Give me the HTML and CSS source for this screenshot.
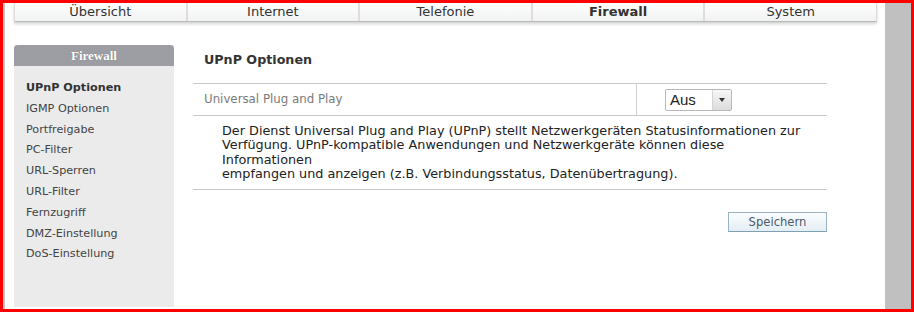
FILE: index.html
```html
<!DOCTYPE html>
<html lang="de">
<head>
    <meta charset="UTF-8">
    <title>Firewall - UPnP Optionen</title>
    <link rel="stylesheet" href="styles.css">
</head>
<body>
    <div class="frame">
        <div class="edge"></div>
        <div class="page">
            <ul class="nav">
                <li>Übersicht</li>
                <li>Internet</li>
                <li>Telefonie</li>
                <li class="active">Firewall</li>
                <li>System</li>
            </ul>

            <div class="layout">
                <div class="sidebar">
                    <div class="sidebar-title">Firewall</div>
                    <ul class="menu">
                        <li class="current">UPnP Optionen</li>
                        <li>IGMP Optionen</li>
                        <li>Portfreigabe</li>
                        <li>PC-Filter</li>
                        <li>URL-Sperren</li>
                        <li>URL-Filter</li>
                        <li>Fernzugriff</li>
                        <li>DMZ-Einstellung</li>
                        <li>DoS-Einstellung</li>
                    </ul>
                </div>

                <div class="main">
                    <h2>UPnP Optionen</h2>
                    <div class="row">
                        <div class="label">Universal Plug and Play</div>
                        <div class="value">
                            <div class="select">
                                <span class="select-text">Aus</span>
                                <span class="select-arrow"></span>
                            </div>
                        </div>
                    </div>
                    <p class="desc">Der Dienst Universal Plug and Play (UPnP) stellt Netzwerkgeräten Statusinformationen zur Verfügung. UPnP-kompatible Anwendungen und Netzwerkgeräte können diese Informationen<br>empfangen und anzeigen (z.B. Verbindungsstatus, Datenübertragung).</p>
                    <div class="actions">
                        <button class="save">Speichern</button>
                    </div>
                </div>
            </div>
        </div>
        <div class="scroll"></div>
    </div>
</body>
</html>
```

FILE: styles.css
```css
body {
    margin: 0;
    font-family: 'DejaVu Sans', Verdana, sans-serif;
    font-size: 11px;
    color: #333;
    background: #fff;
}

.frame {
    display: flex;
    width: 908px;
    height: 306px;
    border: 3px solid #f00;
    overflow: hidden;
}

.edge {
    width: 2px;
    background: #c6c6c6;
}

.page {
    flex: 1;
    padding: 0 8px 0 9px;
    background: #fff;
}

.scroll {
    width: 26px;
    background: #c0c0c0;
}

/* Hauptnavigation */
.nav {
    display: flex;
    margin: 0;
    padding: 0;
    list-style: none;
    height: 18px;
    background: linear-gradient(#ffffff, #f1f2f3);
    border: 1px solid #dcdcdc;
    border-top: none;
    border-bottom-color: #b9b9b9;
    box-shadow: 0 2px 3px rgba(0, 0, 0, 0.18);
}

.nav li {
    flex: 1;
    text-align: center;
    font-size: 13px;
    line-height: 17px;
    color: #333;
    border-left: 2px solid #dedede;
}

.nav li:first-child {
    border-left: none;
}

.nav li.active {
    font-weight: bold;
}

.layout {
    display: flex;
    margin-top: 23px;
}

/* Seitenmenü */
.sidebar {
    width: 160px;
    height: 262px;
    background: #ebebeb;
}

.sidebar-title {
    height: 21px;
    line-height: 21px;
    background: #9c9ea3;
    border-radius: 4px 4px 0 0;
    color: #fff;
    text-align: center;
    font-family: 'Liberation Serif', 'Times New Roman', serif;
    font-size: 13px;
    font-weight: bold;
    text-shadow: 0 0 1px rgba(0, 0, 0, 0.3);
}

.menu {
    margin: 0;
    padding: 12px 0 0 12px;
    list-style: none;
}

.menu li {
    height: 20.8px;
    line-height: 20.8px;
    font-size: 11.2px;
    color: #444;
}

.menu li.current {
    font-weight: bold;
    color: #333;
}

/* Inhalt */
.main {
    width: 634px;
    margin-left: 19px;
}

.main h2 {
    margin: 0;
    padding: 7px 11px 15px;
    font-size: 12.7px;
    line-height: 16px;
    color: #333;
    border-bottom: 1px solid #c8c8c8;
}

.row {
    display: flex;
    height: 31px;
    border-bottom: 1px solid #c8c8c8;
}

.label {
    flex: 1;
    padding-left: 11px;
    line-height: 31px;
    font-size: 11.8px;
    color: #7a7a7a;
    border-right: 1px solid #d0d0d0;
}

.value {
    width: 162px;
    padding-left: 28px;
    display: flex;
    align-items: center;
}

.select {
    display: flex;
    width: 65px;
    height: 20px;
    border: 1px solid #b8b8b8;
    border-radius: 2px;
    background: #fff;
}

.select-text {
    flex: 1;
    padding-left: 4px;
    font-family: 'Liberation Sans', Arial, sans-serif;
    font-size: 15px;
    line-height: 20px;
    color: #222;
}

.select-arrow {
    position: relative;
    width: 18px;
    background: linear-gradient(#f7f7f7, #dcdcdc);
    border-left: 1px solid #d4d4d4;
}

.select-arrow::after {
    content: '';
    position: absolute;
    left: 6px;
    top: 8px;
    border-left: 3.5px solid transparent;
    border-right: 3.5px solid transparent;
    border-top: 4px solid #333;
}

.desc {
    margin: 0;
    padding: 8px 20px 8px 29px;
    font-size: 12.8px;
    line-height: 14.3px;
    color: #222;
    border-bottom: 1px solid #c8c8c8;
}

.actions {
    display: flex;
    justify-content: flex-end;
    padding-top: 22px;
}

.save {
    width: 99px;
    height: 20px;
    padding: 0;
    font-family: 'DejaVu Sans', Verdana, sans-serif;
    font-size: 11.6px;
    color: #4a5a68;
    background: linear-gradient(#fafdff, #e4eef4);
    border: 1px solid #9bb3c2;
    border-bottom-color: #7fa0b3;
}
```
